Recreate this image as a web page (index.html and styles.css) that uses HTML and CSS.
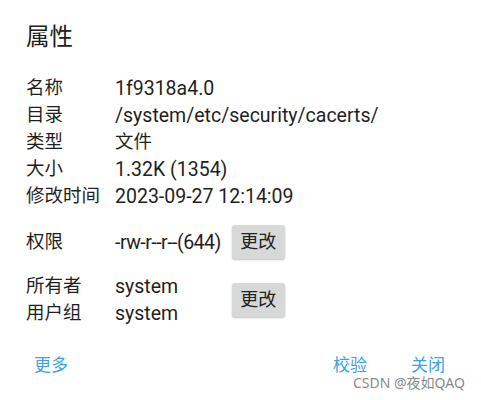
FILE: index.html
```html
<!DOCTYPE html>
<html lang="zh">
<head>
<meta charset="utf-8">
<link rel="stylesheet" href="styles.css">
</head>
<body>
<div class="dialog">
  <div class="title">属性</div>
  <div class="info">
    <div class="label">名称</div><div class="value lat">1f9318a4.0</div>
    <div class="label">目录</div><div class="value lat">/system/etc/security/cacerts/</div>
    <div class="label">类型</div><div class="value">文件</div>
    <div class="label">大小</div><div class="value lat">1.32K (1354)</div>
    <div class="label">修改时间</div><div class="value lat">2023-09-27 12:14:09</div>
  </div>
  <div class="perm">
    <div class="label prow">权限</div><div class="value lat tight prow">-rw-r--r--(644)</div><div class="btn prow">更改</div>
    <div class="label orow1">所有者</div><div class="value lat orow1">system</div>
    <div class="btn obtn">更改</div>
    <div class="label orow2">用户组</div><div class="value lat orow2">system</div>
  </div>
  <div class="footer">
    <div class="link">更多</div>
    <div class="spacer"></div>
    <div class="link">校验</div>
    <div class="link">关闭</div>
  </div>
  <div class="watermark">CSDN @夜如QAQ</div>
</div>
</body>
</html>
```
FILE: styles.css
```css
html, body {
  margin: 0;
  padding: 0;
  background: #ffffff;
}
body {
  font-family: Roboto, "Noto Sans CJK SC", sans-serif;
  color: #1f1f1f;
}
.dialog {
  position: relative;
  width: 481px;
  height: 400px;
  box-sizing: border-box;
  padding: 23px 26px 0 26px;
}
.title {
  font-size: 23.5px;
  line-height: 28px;
  height: 28px;
  color: #202020;
}
.info {
  margin-top: 23.5px;
  display: grid;
  grid-template-columns: 89px auto;
  grid-auto-rows: 27px;
  font-size: 18.5px;
  line-height: 27px;
}
.label, .value {
  white-space: nowrap;
}
.lat {
  font-size: 19.5px;
}
.tight {
  letter-spacing: -0.5px;
}
.perm {
  margin-top: 15.5px;
  display: grid;
  grid-template-columns: 89px max-content max-content;
  grid-template-rows: 34px 13.5px 27px 27px;
  font-size: 18.5px;
  line-height: 27px;
  align-items: center;
}
.prow { grid-row: 1; }
.orow1 { grid-row: 3; }
.orow2 { grid-row: 4; }
.obtn { grid-row: 3 / span 2; grid-column: 3; align-self: center; }
.btn {
  margin-left: 11px;
  width: 53px;
  height: 34px;
  line-height: 34px;
  text-align: center;
  background: #d7d8d8;
  border-radius: 3px;
  box-shadow: 0 1px 2px rgba(0,0,0,0.25);
  font-size: 18px;
  color: #222;
}
.footer {
  margin-top: 25px;
  display: flex;
  align-items: center;
  margin-left: -18px;
  margin-right: 2px;
}
.link {
  font-size: 17px;
  line-height: 26px;
  color: #3aa0f0;
  padding: 0 8px;
}
.spacer { flex: 1; }
.link + .link { margin-left: 28px; }
.footer .link:first-child { margin-left: 18px; }
.watermark {
  position: absolute;
  left: 353px;
  top: 374px;
  font-size: 14px;
  line-height: 18px;
  color: #8a8a8a;
  font-family: "Noto Sans", "Noto Sans CJK SC", sans-serif;
}
```
